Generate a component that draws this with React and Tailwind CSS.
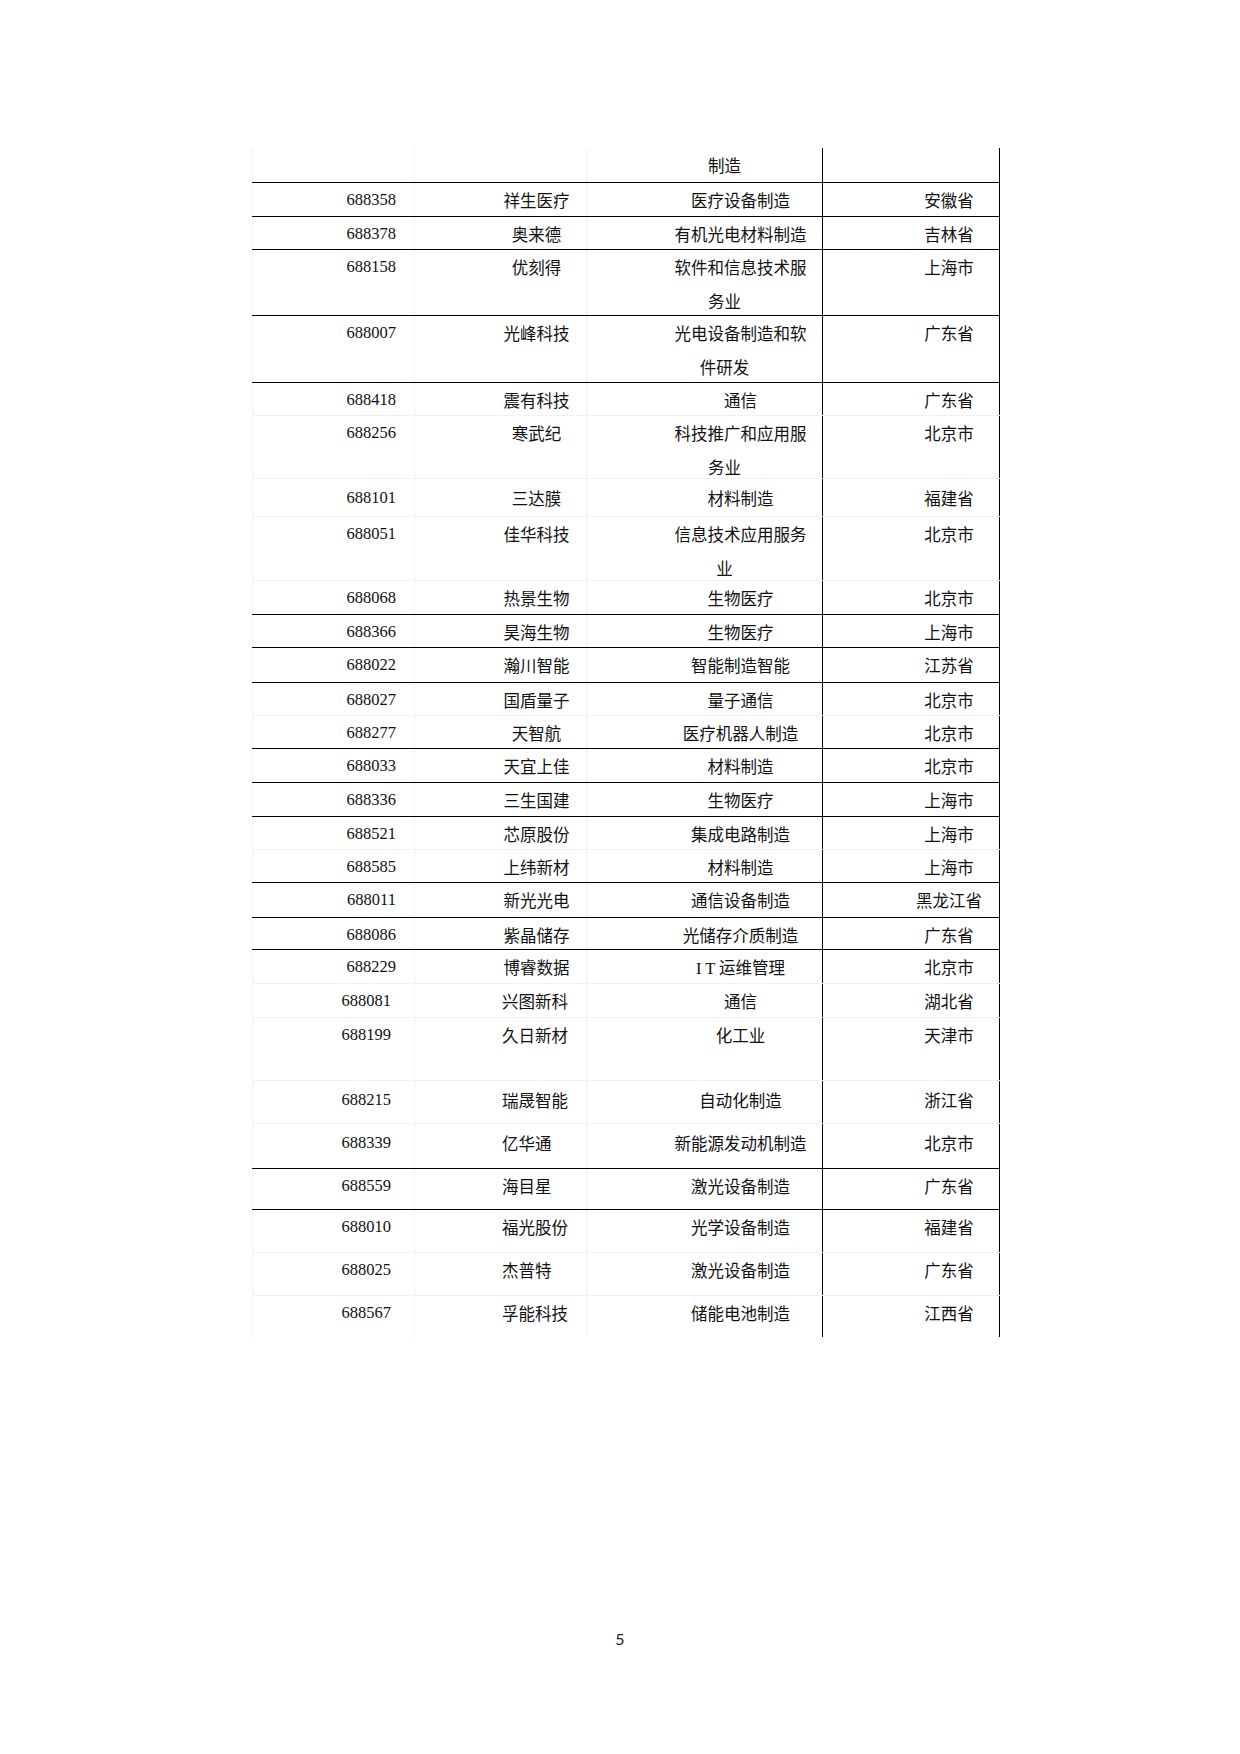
import React from 'react';

const cjk = "font-['Noto_Sans_CJK_SC',sans-serif]";
const num = "font-['Liberation_Serif','Noto_Sans_CJK_SC',serif]";

const lineCls = {
  black: 'border-t border-black',
  faint: 'border-t border-[#f2f2f2]',
  none: '',
};

// h = row height, pt = small nudge of the text, late = later block with shifted code/name
const rows = [
  { h: 34, line: 'none', code: '', name: '', ind: ['制造'], cont: true, prov: '' },
  { h: 33.7, line: 'black', code: '688358', name: '祥生医疗', ind: ['医疗设备制造'], prov: '安徽省' },
  { h: 33.6, line: 'black', code: '688378', name: '奥来德', ind: ['有机光电材料制造'], prov: '吉林省' },
  { h: 65.7, line: 'black', code: '688158', name: '优刻得', ind: ['软件和信息技术服', '务业'], prov: '上海市' },
  { h: 66.7, line: 'black', code: '688007', name: '光峰科技', ind: ['光电设备制造和软', '件研发'], prov: '广东省' },
  { h: 33.3, line: 'black', code: '688418', name: '震有科技', ind: ['通信'], prov: '广东省' },
  { h: 63, line: 'faint', code: '688256', name: '寒武纪', ind: ['科技推广和应用服', '务业'], prov: '北京市' },
  { h: 38, line: 'faint', pt: 2, code: '688101', name: '三达膜', ind: ['材料制造'], prov: '福建省' },
  { h: 64, line: 'faint', code: '688051', name: '佳华科技', ind: ['信息技术应用服务', '业'], prov: '北京市' },
  { h: 34, line: 'faint', code: '688068', name: '热景生物', ind: ['生物医疗'], prov: '北京市' },
  { h: 33.3, line: 'black', code: '688366', name: '昊海生物', ind: ['生物医疗'], prov: '上海市' },
  { h: 34.4, line: 'black', code: '688022', name: '瀚川智能', ind: ['智能制造智能'], prov: '江苏省' },
  { h: 33.3, line: 'black', code: '688027', name: '国盾量子', ind: ['量子通信'], prov: '北京市' },
  { h: 33.3, line: 'faint', code: '688277', name: '天智航', ind: ['医疗机器人制造'], prov: '北京市' },
  { h: 34, line: 'black', code: '688033', name: '天宜上佳', ind: ['材料制造'], prov: '北京市' },
  { h: 33.4, line: 'black', code: '688336', name: '三生国建', ind: ['生物医疗'], prov: '上海市' },
  { h: 33.3, line: 'black', code: '688521', name: '芯原股份', ind: ['集成电路制造'], prov: '上海市' },
  { h: 33.3, line: 'faint', code: '688585', name: '上纬新材', ind: ['材料制造'], prov: '上海市' },
  { h: 34.4, line: 'black', code: '688011', name: '新光光电', ind: ['通信设备制造'], prov: '黑龙江省' },
  { h: 32.3, line: 'black', code: '688086', name: '紫晶储存', ind: ['光储存介质制造'], prov: '广东省' },
  { h: 34, line: 'black', code: '688229', name: '博睿数据', ind: ['IT 运维管理'], prov: '北京市' },
  { h: 33.7, line: 'faint', late: true, code: '688081', name: '兴图新科', ind: ['通信'], prov: '湖北省' },
  { h: 63.3, line: 'faint', late: true, code: '688199', name: '久日新材', ind: ['化工业'], prov: '天津市' },
  { h: 43, line: 'faint', late: true, pt: 2, code: '688215', name: '瑞晟智能', ind: ['自动化制造'], prov: '浙江省' },
  { h: 44.7, line: 'faint', late: true, pt: 2, code: '688339', name: '亿华通', ind: ['新能源发动机制造'], prov: '北京市' },
  { h: 41.3, line: 'black', late: true, pt: -2, code: '688559', name: '海目星', ind: ['激光设备制造'], prov: '广东省' },
  { h: 43, line: 'black', late: true, code: '688010', name: '福光股份', ind: ['光学设备制造'], prov: '福建省' },
  { h: 43, line: 'faint', late: true, pt: -1, code: '688025', name: '杰普特', ind: ['激光设备制造'], prov: '广东省' },
  { h: 42, line: 'faint', late: true, pt: -2, code: '688567', name: '孚能科技', ind: ['储能电池制造'], prov: '江西省' },
];

const Row = ({ r }) => {
  const pad = { paddingTop: r.pt || 0 };
  return (
    <div
      className={`grid grid-cols-[162px_172px_236px_178px] text-[16.5px] leading-[34px] text-[#111] ${lineCls[r.line]}`}
      style={{ height: r.h }}
    >
      <div
        className={`border-l border-[#f2f2f2] text-right ${num} ${r.late ? 'pr-[23px]' : 'pr-[18px]'}`}
        style={pad}
      >
        {r.code}
      </div>
      <div
        className={`border-l border-[#f2f2f2] ${cjk} ${r.late ? 'pl-[87px] text-left' : 'pl-[72px] text-center'}`}
        style={pad}
      >
        {r.name}
      </div>
      <div className={`border-l border-[#f2f2f2] pl-[72px] text-center ${cjk}`} style={pad}>
        {r.ind.map((t, i) => (
          <div key={i} className={i > 0 || r.cont ? 'pr-[32px]' : ''}>
            {t.startsWith('IT') ? (
              <>
                <span className={num}>I T</span> 运维管理
              </>
            ) : (
              t
            )}
          </div>
        ))}
      </div>
      <div className={`border-x border-black pl-[76px] text-center ${cjk}`} style={pad}>
        {r.prov}
      </div>
    </div>
  );
};

export default function App() {
  return (
    <div className="w-[1240px] h-[1754px] bg-white flex flex-col">
      <div className="pt-[148px] pl-[252px]">
        <div className="w-[748px] flex flex-col">
          {rows.map((r, i) => (
            <Row key={i} r={r} />
          ))}
        </div>
      </div>
      <div className="mt-[292px] text-center text-[16px] leading-[20px] text-[#222] font-['Lato','Liberation_Sans',sans-serif]">
        5
      </div>
    </div>
  );
}
